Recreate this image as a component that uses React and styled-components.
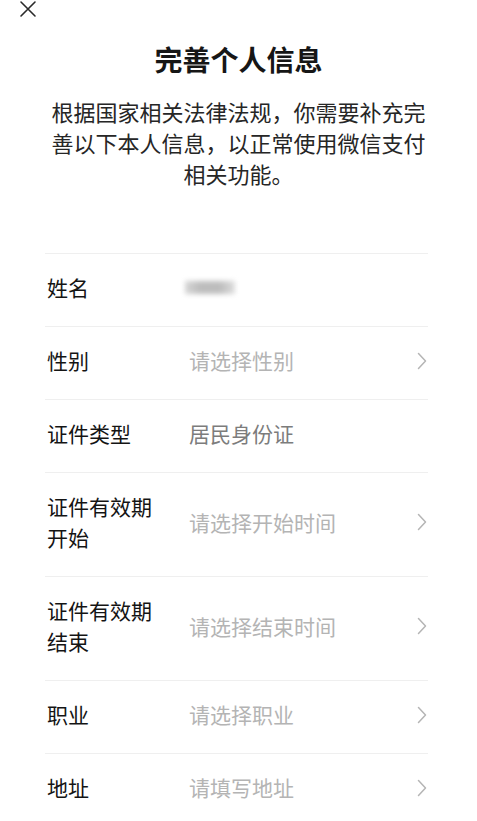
// Imports
import React from 'react';
import styled, { createGlobalStyle } from 'styled-components';

// Données du formulaire
const fields = [
	{ label: '姓名', value: null, blurred: true },
	{ label: '性别', value: '请选择性别', placeholder: true, arrow: true },
	{ label: '证件类型', value: '居民身份证' },
	{ label: '证件有效期开始', value: '请选择开始时间', placeholder: true, arrow: true },
	{ label: '证件有效期结束', value: '请选择结束时间', placeholder: true, arrow: true },
	{ label: '职业', value: '请选择职业', placeholder: true, arrow: true },
	{ label: '地址', value: '请填写地址', placeholder: true, arrow: true },
];

// Icônes
const CloseIcon = () => (
	<svg width="18" height="18" viewBox="0 0 18 18">
		<path d="M2 2 L16 16 M16 2 L2 16" stroke="#2a2a2a" strokeWidth="1.6" strokeLinecap="round" />
	</svg>
);

const Chevron = () => (
	<svg width="10" height="18" viewBox="0 0 10 18">
		<polyline points="1.5,1.5 8.5,9 1.5,16.5" fill="none" stroke="#b5b5b5" strokeWidth="1.5" strokeLinecap="round" strokeLinejoin="round" />
	</svg>
);

// Fonction
const App = () => {
	return (
		<>
			<GlobalStyle />
			<Page>
				<TopBar>
					<CloseButton aria-label="关闭"><CloseIcon /></CloseButton>
				</TopBar>
				<Title>完善个人信息</Title>
				<Intro>根据国家相关法律法规，你需要补充完善以下本人信息，以正常使用微信支付相关功能。</Intro>
				<List>
					{
						fields.map((field) => {
							return (
								<Row key={ field.label }>
									<Label>{ field.label }</Label>
									<Value $placeholder={ field.placeholder }>
										{ field.blurred ? <BlurredName /> : field.value }
									</Value>
									<Arrow>{ field.arrow && <Chevron /> }</Arrow>
								</Row>
							);
						})
					}
				</List>
			</Page>
		</>
	);
};

// Styled components
const GlobalStyle = createGlobalStyle`
	body {
		margin: 0;
		background: #fff;
		font-family: "Noto Sans CJK SC", "Noto Sans", sans-serif;
	}
`;

const Page = styled.div`
	width: 477px;
	min-height: 821px;
	background: #fff;
`;

const TopBar = styled.div`
	display: flex;
	align-items: center;
	height: 20px;
	padding-left: 19px;
`;

const CloseButton = styled.button`
	display: flex;
	align-items: center;
	justify-content: center;
	padding: 0;
	border: none;
	background: none;
	margin-top: -2px;
`;

const Title = styled.h1`
	margin: 19px 0 0;
	text-align: center;
	font-size: 28px;
	line-height: 40px;
	font-weight: 700;
	color: #161616;
`;

const Intro = styled.p`
	margin: 17px 0 0;
	padding: 0 48px;
	text-align: center;
	font-size: 22px;
	line-height: 31px;
	color: #262626;
`;

const List = styled.div`
	margin: 64px 49px 0 45px;
	border-top: 1px solid #efefef;
`;

const Row = styled.div`
	display: flex;
	align-items: center;
	padding: 18px 0 23px 2px;
	border-bottom: 1px solid #efefef;
	&:last-child {
		border-bottom: none;
	}
`;

const Label = styled.div`
	flex: 0 0 142px;
	box-sizing: border-box;
	padding-right: 30px;
	font-size: 21px;
	line-height: 31px;
	color: #141414;
`;

const Value = styled.div`
	flex: 1;
	font-size: 21px;
	line-height: 31px;
	color: ${ (props) => props.$placeholder ? '#b4b4b4' : '#7c7c7c' };
`;

const BlurredName = styled.div`
	width: 50px;
	height: 13px;
	margin-left: -4px;
	background: linear-gradient(90deg, #d6d6d6 0%, #bdbdbd 30%, #bdbdbd 70%, #dedede 100%);
	filter: blur(2.5px);
`;

const Arrow = styled.div`
	display: flex;
	align-items: center;
	width: 10px;
	margin-right: 1px;
`;

// Export
export default App;
